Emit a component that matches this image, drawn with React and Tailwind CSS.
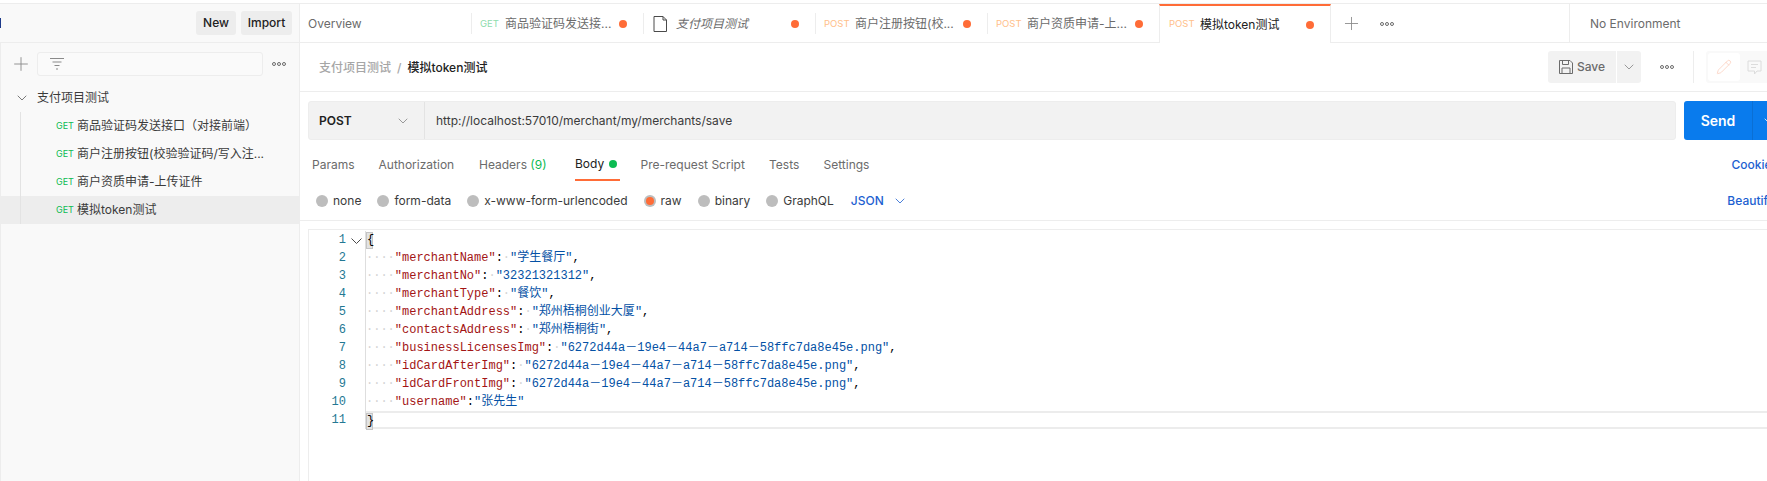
import React from 'react';
import { Plus, ChevronDown, Pencil } from 'lucide-react';

const SANS = "font-['Inter','Noto_Sans_CJK_SC',sans-serif]";

const Dots = () => (
  <svg width="14" height="6" viewBox="0 0 14 6" fill="none" stroke="#6b6b6b" strokeWidth="1" className="shrink-0">
    <circle cx="2" cy="3" r="1.5" />
    <circle cx="7" cy="3" r="1.5" />
    <circle cx="12" cy="3" r="1.5" />
  </svg>
);

const collection = [
  { label: '商品验证码发送接口（对接前端）' },
  { label: '商户注册按钮(校验验证码/写入注...' },
  { label: '商户资质申请-上传证件' },
  { label: '模拟token测试', active: true },
];

const Sidebar = () => (
  <aside className="w-[300px] shrink-0 flex flex-col bg-[#f9f9f9] border-r border-[#ededed]">
    <div className="h-[39px] shrink-0 flex items-center justify-end gap-[5px] pr-[7px] border-b border-[#ededed] relative">
      <span className="absolute left-0 top-[14px] w-[1px] h-[10px] bg-[#1d3a8a]"></span>
      <button className="h-6 w-[40px] rounded-[3px] bg-[#ededed] text-[12px] font-medium text-[#212121]">New</button>
      <button className="h-6 w-[51px] rounded-[3px] bg-[#ededed] text-[12px] font-medium text-[#212121]">Import</button>
    </div>
    <div className="flex-1 border-l border-[#ededed]">
      <div className="flex items-center h-6 mt-[9px] pl-[9px] pr-[13px]">
        <Plus size={22} strokeWidth={1} color="#8a8a8a" className="shrink-0" />
        <div className="w-[227px] h-6 ml-[5px] mr-[9px] border border-[#ededed] rounded-[3px] bg-[#fafafa] flex items-center pl-[11px]">
          <svg width="16" height="14" viewBox="0 0 16 14" fill="none" stroke="#8a8a8a" strokeWidth="1">
            <path d="M1 1.5h14M3.500 5h9M5.500 8.500h5M7 12h2" />
          </svg>
        </div>
        <Dots />
      </div>
      <div className="flex items-center h-[28px] mt-[8px] pl-[13px] text-[12px] text-[#3b3b3b]">
        <ChevronDown size={16} strokeWidth={1.1} color="#4a4a4a" className="shrink-0" />
        <span className="ml-[7px]">支付项目测试</span>
      </div>
      <div className="flex flex-col relative">
        <span className="absolute left-[19px] top-0 bottom-0 w-[1px] bg-[#e3e3e3]"></span>
        {collection.map((row) => (
          <div key={row.label} className={`h-[28px] flex items-center pl-[55px] text-[12px] text-[#3b3b3b] ${row.active ? 'bg-[#ededed]' : ''}`}>
            <span className="text-[9px] text-[#0cbb52] w-[21px] shrink-0">GET</span>
            <span className="whitespace-nowrap">{row.label}</span>
          </div>
        ))}
      </div>
    </div>
  </aside>
);

const Tab = ({ method, label, italic }) => (
  <div className="w-[172px] h-full shrink-0 flex items-center pt-[2px] pl-[9px] pr-[16px] border-b border-[#ededed] relative">
    <span className="absolute left-0 top-[9px] h-[21px] w-[1px] bg-[#ededed]"></span>
    {method === 'DOC' ? (
      <svg width="14" height="16" viewBox="0 0 14 16" fill="none" stroke="#4a4a4a" strokeWidth="1" className="ml-[1px] mr-[9px] shrink-0">
        <path d="M1 .5h9l3.500 3.500v11.500h-12.500z" />
        <path d="M10 .5v3.500h3.500" />
      </svg>
    ) : (
      <span className={`text-[9.500px] shrink-0 ${method === 'GET' ? 'w-[25px] text-[#8fdcae]' : 'w-[31px] text-[#ffc08a]'}`}>{method}</span>
    )}
    <span className={`flex-1 whitespace-nowrap text-[12px] text-[#6b6b6b] ${italic ? 'italic' : ''}`}>{label}</span>
    <span className="w-2 h-2 rounded-full bg-[#ff6c37] shrink-0"></span>
  </div>
);

const TabBar = () => (
  <div className="h-[39px] shrink-0 flex items-stretch">
    <div className="w-[171px] shrink-0 flex items-center pt-[2px] pl-[8px] text-[12px] text-[#6b6b6b] border-b border-[#ededed]">Overview</div>
    <Tab method="GET" label="商品验证码发送接..." />
    <Tab method="DOC" label="支付项目测试" italic />
    <Tab method="POST" label="商户注册按钮(校..." />
    <Tab method="POST" label="商户资质申请-上..." />
    <div className="w-[172px] shrink-0 flex items-center pl-[9px] pr-[16px] border-t-2 border-t-[#ff6c37] border-l border-r border-[#ededed]">
      <span className="w-[31px] shrink-0 text-[9.500px] text-[#ffc08a]">POST</span>
      <span className="flex-1 whitespace-nowrap text-[12px] text-[#212121]">模拟token测试</span>
      <span className="w-2 h-2 rounded-full bg-[#ff6c37] shrink-0"></span>
    </div>
    <div className="w-[238px] shrink-0 flex items-center pt-[1px] pl-[10px] gap-[18px] border-b border-[#ededed]">
      <Plus size={21} strokeWidth={1} color="#8a8a8a" />
      <Dots />
    </div>
    <div className="flex-1 flex items-center pt-[1px] pl-[20px] text-[12px] text-[#6b6b6b] border-l border-b border-[#ededed] whitespace-nowrap">No Environment</div>
  </div>
);

const RequestBar = () => (
  <div className="h-[49px] shrink-0 flex items-center pl-[19px] border-b border-[#ededed] overflow-hidden">
    <div className="flex-1 flex items-center pt-[1px] text-[12px] font-medium whitespace-nowrap">
      <span className="text-[#a6a6a6]">支付项目测试</span>
      <span className="text-[#a6a6a6] mx-[6px]">/</span>
      <span className="text-[#212121]">模拟token测试</span>
    </div>
    <div className="w-[68px] h-8 shrink-0 flex items-center justify-center gap-[4px] rounded-l-[3px] bg-[#f2f2f2] text-[12px] font-medium text-[#6b6b6b]">
      <svg width="14" height="14" viewBox="0 0 14 14" fill="none" stroke="#6b6b6b" strokeWidth="1" className="shrink-0">
        <path d="M.5.5h10.500l2.500 2.500v10.500h-13z" />
        <path d="M3.500.5v4h6v-4M3 13.500v-5.500h8v5.500" />
      </svg>
      Save
    </div>
    <div className="w-6 h-8 ml-[1px] shrink-0 flex items-center justify-center rounded-r-[3px] bg-[#f2f2f2]">
      <ChevronDown size={16} strokeWidth={1} color="#6b6b6b" />
    </div>
    <div className="w-[52px] shrink-0 flex justify-center"><Dots /></div>
    <span className="w-[1px] h-8 shrink-0 bg-[#ededed]"></span>
    <div className="ml-[12px] w-[61px] h-8 shrink-0 flex items-center gap-[7px] pl-[2px] rounded-l-[3px] bg-[#f9f9f9]">
      <div className="w-8 h-7 flex items-center justify-center rounded-[3px] bg-white">
        <Pencil size={16} strokeWidth={1} color="#fbc5b0" />
      </div>
      <svg width="15" height="15" viewBox="0 0 15 15" fill="none" stroke="#dcdcdc" strokeWidth="1" className="shrink-0">
        <path d="M1 1h13v10h-4l-2.500 3v-3h-6.500z" />
        <path d="M4 4.500h7M4 7.500h5" />
      </svg>
    </div>
  </div>
);

const UrlBar = () => (
  <div className="flex mt-[9px] ml-[8px] h-[39px] shrink-0">
    <div className="w-[1368px] shrink-0 flex bg-[#f2f2f2] border border-[#ededed] rounded-[3px]">
      <div className="w-[116px] shrink-0 flex items-center justify-between pl-[10px] pr-[13px] border-r border-[#e3e3e3]">
        <span className="text-[12px] font-semibold text-[#212121]">POST</span>
        <ChevronDown size={16} strokeWidth={1} color="#6b6b6b" />
      </div>
      <div className="flex-1 flex items-center pl-[11px] text-[12px] text-[#3b3b3b]">http://localhost:57010/merchant/my/merchants/save</div>
    </div>
    <div className="ml-[8px] w-[100px] shrink-0 flex rounded-l-[3px] bg-[#097bed] text-white">
      <div className="w-[68px] shrink-0 flex items-center justify-center text-[14px] font-semibold">Send</div>
      <div className="flex-1 flex items-center pl-[8px] border-l border-[#0a6fd4]">
        <ChevronDown size={16} strokeWidth={1.2} color="#ffffff" />
      </div>
    </div>
  </div>
);

const reqTabs = [
  { label: 'Params', w: 'w-[66.500px]' },
  { label: 'Authorization', w: 'w-[100.500px]' },
  { label: 'Headers', count: '(9)', w: 'w-[96px]' },
  { label: 'Body', active: true, w: 'w-[65.500px]' },
  { label: 'Pre-request Script', w: 'w-[128.500px]' },
  { label: 'Tests', w: 'w-[54.500px]' },
  { label: 'Settings', w: 'w-[80px]' },
];

const RequestTabs = () => (
  <div className="h-[41px] shrink-0 flex items-stretch pl-[12px] text-[12px] whitespace-nowrap">
    {reqTabs.map((t) => (
      <div key={t.label} className={`${t.w} shrink-0 flex items-center`}>
        {t.active ? (
          <span className="h-full flex items-center gap-[5px] pt-[9px] pr-[3px] border-b-2 border-[#ff6c37] text-[#212121]">
            {t.label}
            <span className="w-2 h-2 rounded-full bg-[#0cbb52]"></span>
          </span>
        ) : (
          <span className="text-[#6b6b6b] pt-[8px]">
            {t.label}
            {t.count && <span className="text-[#0cbb52]"> {t.count}</span>}
          </span>
        )}
      </div>
    ))}
    <span className="ml-auto mr-[-11px] self-center pt-[8px] font-medium text-[#1d5fd1]">Cookies</span>
  </div>
);

const bodyModes = ['none', 'form-data', 'x-www-form-urlencoded', 'raw', 'binary', 'GraphQL'];

const BodyOptions = () => (
  <div className="h-[40px] shrink-0 flex items-center pl-[16px] gap-[16px] text-[12px] text-[#3b3b3b] border-b border-[#ededed] whitespace-nowrap">
    {bodyModes.map((m) => (
      <label key={m} className="flex items-center gap-[5px]">
        <span className="w-3 h-3 rounded-full bg-[#bdbdbd] flex items-center justify-center">
          {m === 'raw' && <span className="w-2 h-2 rounded-full bg-[#ff6c37]"></span>}
        </span>
        {m}
      </label>
    ))}
    <span className="flex items-center gap-[8px] font-medium text-[#1d5fd1] ml-[1px]">
      JSON
      <ChevronDown size={16} strokeWidth={1.2} color="#1d5fd1" />
    </span>
    <span className="ml-auto mr-[-8px] font-medium text-[#1d5fd1]">Beautify</span>
  </div>
);

const Key = ({ children }) => <span className="text-[#a31515]">{children}</span>;
const Str = ({ children }) => <span className="text-[#0451a5]">{children}</span>;
const Ws = ({ children }) => <span className="text-[#d4d4d4]">{children}</span>;
const Bracket = ({ children }) => (
  <span className="inline-block w-[7px] h-[17px] bg-[#e3e3e3] border border-[#c4c4c4] leading-[15px] text-center">{children}</span>
);

// wide dash in the ids, same as the reference render
const UUID = '6272d44a－19e4－44a7－a714－58ffc7da8e45e.png';

const fields = [
  ['merchantName', '学生餐厅'],
  ['merchantNo', '32321321312'],
  ['merchantType', '餐饮'],
  ['merchantAddress', '郑州梧桐创业大厦'],
  ['contactsAddress', '郑州梧桐街'],
  ['businessLicensesImg', UUID],
  ['idCardAfterImg', UUID],
  ['idCardFrontImg', UUID],
];

const Gutter = () => (
  <div className="w-[37px] shrink-0 text-right text-[#237893]">
    {Array.from({ length: 11 }, (_, i) => (
      <div key={i} className="h-[18px]">{i + 1}</div>
    ))}
  </div>
);

const Editor = () => (
  <div className="flex-1 mt-[8px] ml-[8px] border-t border-l border-[#ededed] flex pt-[1px] text-[12px] leading-[18px] font-['Liberation_Mono','Noto_Sans_CJK_SC',monospace] overflow-hidden">
    <Gutter />
    <div className="w-[19px] shrink-0 flex justify-center pt-[7px] pl-[2px]">
      <svg width="11" height="6" viewBox="0 0 11 6" fill="none" stroke="#4a4a4a" strokeWidth="1" className="shrink-0">
        <path d="M.5.5l5 5 5-5" />
      </svg>
    </div>
    <div className="flex-1 self-start border-l border-[#dedede] whitespace-pre text-[#000000]">
      <div className="h-[18px]"><Bracket>{'{'}</Bracket></div>
      {fields.map(([k, v]) => (
        <div key={k} className="h-[18px]">
          <Ws>····</Ws><Key>"{k}"</Key>:<Ws>·</Ws><Str>"{v}"</Str>,
        </div>
      ))}
      <div className="h-[18px]">
        <Ws>····</Ws><Key>"username"</Key>:<Str>"张先生"</Str>
      </div>
      <div className="h-[18px] border-y-2 border-[#ececec] leading-[14px]"><Bracket>{'}'}</Bracket></div>
    </div>
  </div>
);

export default function App() {
  return (
    <div className={`w-[1767px] h-[481px] overflow-hidden flex flex-col bg-white ${SANS}`}>
      <div className="h-[4px] shrink-0 border-b border-[#ededed]"></div>
      <div className="flex-1 flex min-h-0">
        <Sidebar />
        <main className="flex-1 min-w-0 flex flex-col">
          <TabBar />
          <RequestBar />
          <UrlBar />
          <RequestTabs />
          <BodyOptions />
          <Editor />
        </main>
      </div>
    </div>
  );
}
